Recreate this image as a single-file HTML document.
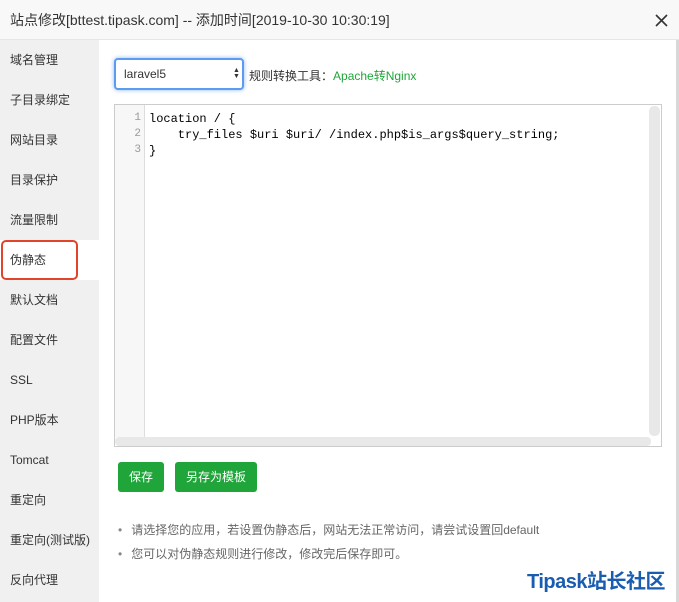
<!DOCTYPE html>
<html><head><meta charset="utf-8"><style>
*{margin:0;padding:0;box-sizing:border-box}
body{width:679px;height:602px;overflow:hidden;background:#fff;font-family:"Liberation Sans","Noto Sans CJK SC",sans-serif;position:relative;color:#333}
.hd{position:absolute;left:0;top:0;width:679px;height:40px;background:#f8f8f8;border-bottom:1px solid #e6e6e6;font-size:14px;line-height:40px;padding-left:10px;color:#333}
.x{position:absolute;right:11px;top:14px}
.side{position:absolute;left:0;top:40px;width:99px;height:562px;background:#f0f0f0}
.side div{height:40px;line-height:40px;padding-left:10px;font-size:12px;color:#333}
.side .on{background:#fff;position:relative}
.side .on:after{content:"";position:absolute;left:1px;top:0;width:73px;height:36px;border:2px solid #e0452c;border-radius:5px}
.sel{position:absolute;left:114px;top:58px;width:130px;height:32px;border:2px solid #5b9cf0;border-radius:4px;box-shadow:0 0 4px #8bb8f5;font-size:12px;line-height:28px;padding-left:8px;background:#fff}
.tool{position:absolute;left:249px;top:67px;font-size:12px;color:#333}
.tool b{font-weight:normal;color:#20a53a}
.ed{position:absolute;left:114px;top:104px;width:548px;height:343px;border:1px solid #ccc;background:#fff}
.gut{position:absolute;left:0;top:0;width:30px;height:332px;background:#f7f7f7;border-right:1px solid #ddd}
.ln{position:absolute;left:0;width:26px;text-align:right;font-size:11px;color:#999;font-family:"Liberation Mono",monospace}
.code{position:absolute;left:34px;top:6px;font-family:"Liberation Mono",monospace;font-size:12px;line-height:16px;white-space:pre;color:#000}
.vs{position:absolute;right:1px;top:1px;width:11px;height:330px;background:#e8e8e8;border-radius:5px}
.hs{position:absolute;left:0;bottom:0;width:536px;height:9px;background:#e8e8e8;border-radius:4px}
.btn{position:absolute;top:462px;height:30px;line-height:30px;background:#20a53a;color:#fff;font-size:12px;border-radius:3px;text-align:center}
.tip{position:absolute;left:118px;font-size:12px;color:#666}
.tip:before{content:"•";margin-right:9px;color:#888}
.logo{position:absolute;left:527px;top:565px;font-size:20px;font-weight:bold;color:#1a5db0;letter-spacing:-0.5px}
.pg{position:absolute;right:0;top:40px;width:3px;height:562px;background:#d8d8d8}
</style></head><body>
<div class="hd">站点修改[bttest.tipask.com] -- 添加时间[2019-10-30 10:30:19]<svg class="x" width="13" height="13" viewBox="0 0 13 13"><path d="M1 1L12 12M12 1L1 12" stroke="#333" stroke-width="1.6"/></svg></div>
<div class="side">
<div>域名管理</div><div>子目录绑定</div><div>网站目录</div><div>目录保护</div><div>流量限制</div><div class="on">伪静态</div><div>默认文档</div><div>配置文件</div><div>SSL</div><div>PHP版本</div><div>Tomcat</div><div>重定向</div><div>重定向(测试版)</div><div>反向代理</div>
</div>
<div class="sel">laravel5</div>
<div style="position:absolute;left:233px;top:68px;font-size:7px;line-height:6px;color:#333">▲<br>▼</div>
<div class="tool">规则转换工具：<b>Apache转Nginx</b></div>
<div class="ed">
<div class="gut"></div>
<div class="ln" style="top:7px">1</div><div class="ln" style="top:23px">2</div><div class="ln" style="top:39px">3</div>
<div class="code">location / {
    try_files $uri $uri/ /index.php$is_args$query_string;
}</div>
<div class="vs"></div><div class="hs"></div>
</div>
<div class="btn" style="left:118px;width:46px">保存</div>
<div class="btn" style="left:175px;width:82px">另存为模板</div>
<div class="tip" style="top:521px">请选择您的应用，若设置伪静态后，网站无法正常访问，请尝试设置回default</div>
<div class="tip" style="top:545px">您可以对伪静态规则进行修改，修改完后保存即可。</div>
<div class="logo">Tipask站长社区</div>
<div class="pg"></div>
</body></html>
